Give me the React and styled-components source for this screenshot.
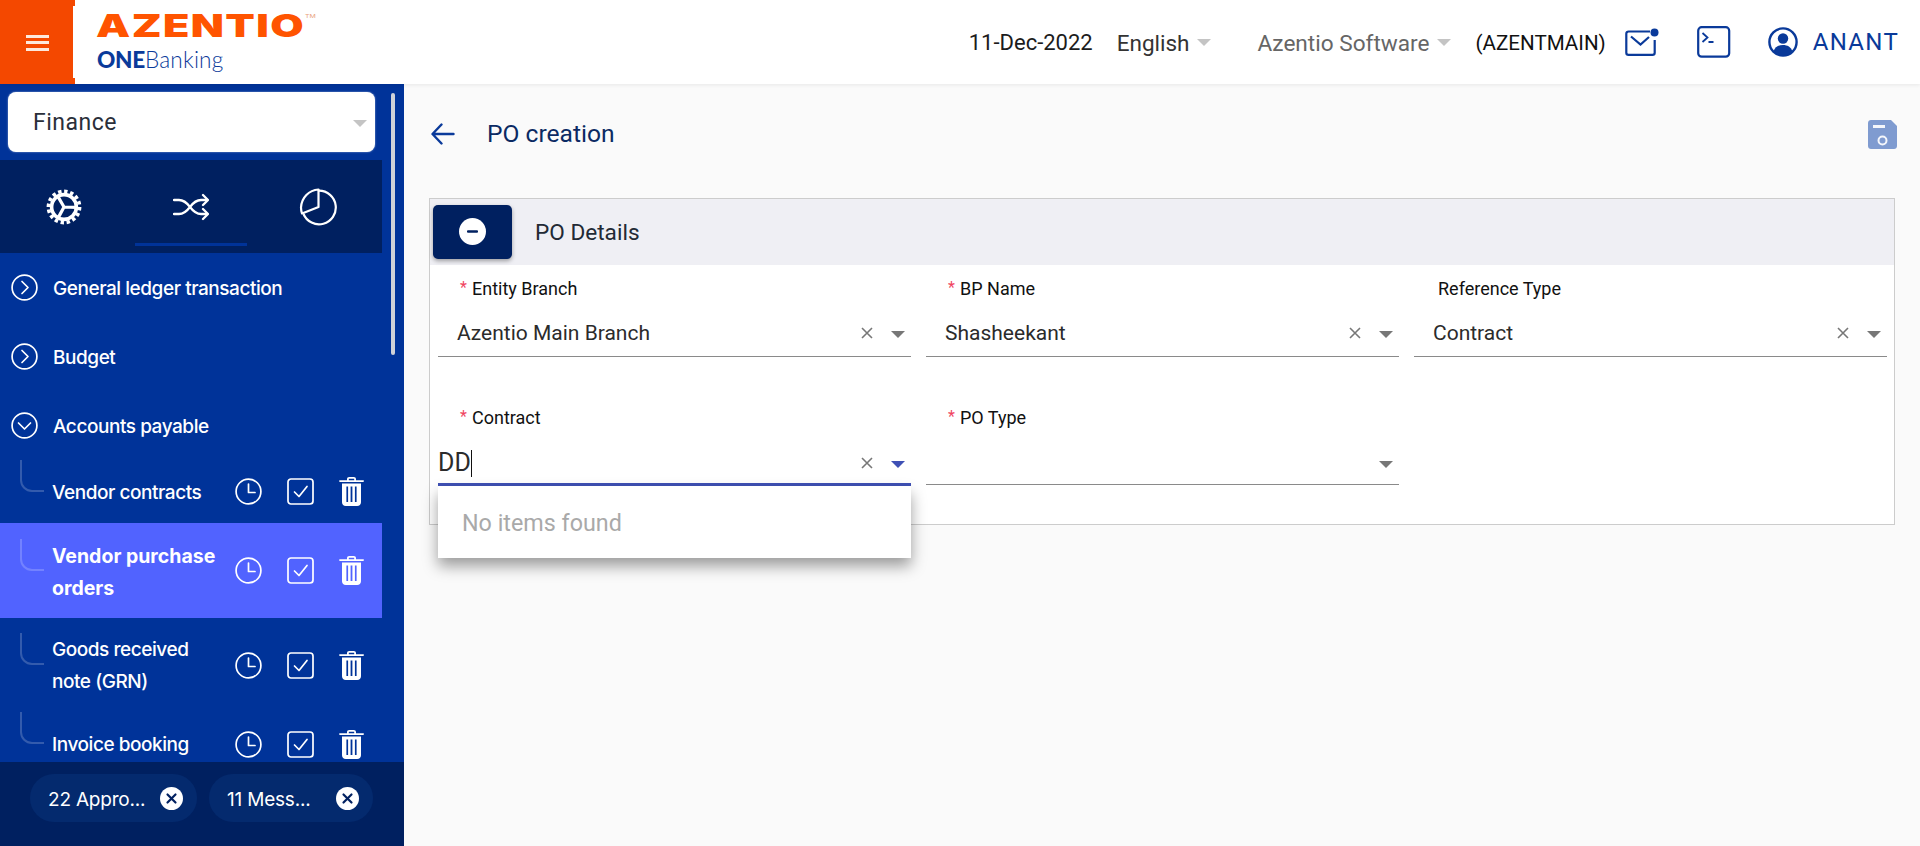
import React from 'react';
import styled, { createGlobalStyle } from 'styled-components';

const Global = createGlobalStyle`
  html, body { margin: 0; padding: 0; height: 100%; overflow: hidden; }
  body { font-family: Roboto, "Liberation Sans", sans-serif; background: #fafafa; }
  #root { height: 100%; }
  * { box-sizing: border-box; }
`;

const Page = styled.div`display: flex; flex-direction: column; height: 846px; width: 1920px;`;

/* ---------- header ---------- */
const Header = styled.header`
  display: flex; align-items: center; height: 84px; flex: none; background: #fff;
  box-shadow: 0 1px 4px rgba(0,0,0,.08); position: relative; z-index: 2;
`;
const Burger = styled.div`
  position: relative; width: 75px; height: 84px; flex: none; background: #f44800;
  display: flex; align-items: center; justify-content: center;
  &::after { content: ''; position: absolute; right: 0; top: 6px; bottom: 6px; width: 2px; background: #fff; }
`;
const BurgerLines = styled.div`
  width: 23px; height: 16px; margin-top: 1px;
  border-top: 3px solid #fde8dc; border-bottom: 3px solid #fde8dc; position: relative;
  &::before { content: ''; position: absolute; left: 0; right: 0; top: 3px; height: 3px; background: #fde8dc; }
`;
const Logo = styled.div`display: flex; flex-direction: column; margin-left: 22px; width: 240px;`;
const LogoMark = styled.div`
  font: 900 31px/30px Inter, sans-serif; color: #ff5400; transform: scaleX(1.39); transform-origin: left center;
  letter-spacing: 1px; height: 30px; margin-top: 0; margin-left: -1px; white-space: nowrap;
  sup { font-size: 5px; font-weight: 400; color: #e9a27c; vertical-align: top; line-height: 10px; letter-spacing: 0; margin-left: 0; }
`;
const LogoSub = styled.div`
  font: 300 22.6px/26px Lato, sans-serif; color: #0a3a9a; margin-top: 6px; letter-spacing: .2px;
  b { font-weight: 900; letter-spacing: -.3px; }
`;
const HeaderRight = styled.div`display: flex; align-items: center; margin-left: auto; height: 100%;`;
const HeaderText = styled.span`
  font: 400 ${p => p.$size || 20}px/26px Roboto, sans-serif; color: ${p => p.$color}; margin: ${p => p.$mt || 0}px 0 0 ${p => p.$ml}px; white-space: nowrap;
  letter-spacing: ${p => p.$ls || 0}px;
`;
const HeaderEnd = styled.div`width: 21px; flex: none;`;
const SmallCaret = styled.i`
  display: block; width: 0; height: 0; margin-left: ${p => p.$ml || 8}px; margin-top: 1px;
  border-left: 7px solid transparent; border-right: 7px solid transparent; border-top: 7px solid #c4c4c4;
`;
const HeaderIcon = styled.svg`display: block; flex: none; margin-left: ${p => p.$ml}px; color: #0a3a9a;`;

/* ---------- body ---------- */
const Body = styled.div`display: flex; flex: 1; min-height: 0;`;
const Sidebar = styled.aside`
  position: relative; width: 404px; flex: none; background: #003399; display: flex; flex-direction: column;
`;
const ScrollThumb = styled.div`position: absolute; left: 391px; top: 9px; width: 4px; height: 262px; background: #cfd2d8; border-radius: 2px;`;
const SelectWrap = styled.div`padding: 8px 29px 8px 8px; flex: none;`;
const ModuleSelect = styled.div`
  height: 60px; background: #fff; border-radius: 8px; display: flex; align-items: center; padding: 1px 8px 0 25px;
  justify-content: space-between; font: 400 23px/28px Roboto, sans-serif; color: #2a2f3a; letter-spacing: .5px;
  box-shadow: 0 0 2px rgba(255,255,255,.6);
`;
const Tabs = styled.div`width: 382px; height: 93px; flex: none; background: #002060; display: grid; grid-template-columns: repeat(3, 127px);`;
const Tab = styled.div`position: relative; display: flex; align-items: center; justify-content: center; color: #fff;`;
const TabLine = styled.div`position: absolute; left: 8px; right: 7px; bottom: 7px; height: 3px; background: #003399;`;
const Menu = styled.nav`flex: 1; min-height: 0; overflow: hidden; width: 382px;`;
const GroupRow = styled.div`
  display: flex; align-items: center; height: 69px; padding-left: 11px; gap: 15px;
  font: 500 19px/24px Inter, sans-serif; color: #fff; letter-spacing: -.45px;
  svg { flex: none; }
`;
const GroupText = styled.span`margin-top: 3px;`;
const SubRow = styled.div`
  display: flex; align-items: center; height: ${p => p.$h}px; padding: 0 18px 0 20px;
  background: ${p => p.$active ? '#5163ff' : 'transparent'};
`;
const Connector = styled.div`
  align-self: flex-start; flex: none; width: 24px; height: 32px; margin-top: ${p => p.$top}px;
  border-left: 2px solid rgba(255,255,255,.2); border-bottom: 2px solid rgba(255,255,255,.2); border-bottom-left-radius: 12px;
`;
const SubText = styled.div`
  margin: 2px 0 0 8px; width: 176px; font: ${p => p.$active ? '700 19.5px' : '500 19px'}/32px Inter, sans-serif; color: #fff;
  letter-spacing: ${p => p.$active ? 0 : -.45}px;
`;
const Actions = styled.div`display: flex; align-items: center; gap: 25px; margin-left: auto; color: #fff; svg { display: block; }`;
const Footer = styled.footer`
  height: 84px; flex: none; background: #002060; display: flex; gap: 12px; padding: 12px 0 0 30px; position: relative;
`;
const Chip = styled.div`
  display: flex; align-items: center; justify-content: space-between; width: ${p => p.$w}px; height: 48px;
  border-radius: 24px; background: #042a6e; padding: 0 14px 0 18px; color: #fff;
  font: 400 19px/26px Inter, sans-serif; letter-spacing: -.2px;
`;
const ChipText = styled.span`margin-top: 3px; white-space: nowrap;`;

/* ---------- main ---------- */
const Main = styled.main`flex: 1; min-width: 0; padding: 26px 25px 0 25px; background: #fafafa;`;
const TitleRow = styled.div`display: flex; align-items: center; height: 48px; padding-left: 2px; margin: 0 -2px 40px 0;`;
const Title = styled.h1`margin: 0 0 0 32px; font: 400 24.6px/30px Roboto, sans-serif; color: #0b2a63;`;
const SaveIcon = styled.svg`display: block; margin-left: auto;`;
const Card = styled.section`border: 1px solid #cccccc; background: #fff;`;
const CardHead = styled.div`display: flex; align-items: center; height: 66px; background: #efeff4; padding: 0 0 0 3px;`;
const ToggleBtn = styled.div`
  width: 79px; height: 54px; border-radius: 5px; background: #002060; display: flex; align-items: center; justify-content: center;
  box-shadow: 0 2px 4px rgba(0,0,0,.35); margin-top: -1px;
`;
const CardTitle = styled.h2`margin: 2px 0 0 23px; font: 400 22.6px/28px Roboto, sans-serif; color: #222a35;`;
const Fields = styled.div`
  display: grid; grid-template-columns: repeat(3, 473px); column-gap: 15px; row-gap: 36px; padding: 0 0 39px 8px;
`;
const Field = styled.div`display: flex; flex-direction: column; height: 92px; position: relative;`;
const Label = styled.label`
  margin-top: ${p => p.$low ? 15 : 14}px; height: 20px; padding-left: ${p => p.$req ? 22 : 24}px; font: 400 18px/20px Roboto, sans-serif; color: #111;
  display: flex; align-items: center;
`;
const Star = styled.span`color: #f0455f; font-size: 16px; width: 12px; flex: none; margin-top: -3px;`;
const Control = styled.div`
  position: relative; flex: 1; display: flex; align-items: flex-end;
  padding: 0 6px ${p => p.$focus ? 5 : p.$low ? 6 : 8}px ${p => p.$focus ? 0 : 19}px;
  border-bottom: ${p => p.$focus ? '3px solid #3f51b5' : '1px solid #8a8a8a'};
  margin-bottom: ${p => p.$focus ? -1 : 0}px;
`;
const Value = styled.span`font: 400 21px/30px Roboto, sans-serif; color: #2b2b2b; white-space: nowrap;`;
const Typed = styled.span`font: 400 25px/30px Roboto, sans-serif; color: #2b2b2b; display: flex; align-items: center;`;
const Caret = styled.i`display: block; width: 1px; height: 27px; background: #111;`;
const ControlIcons = styled.div`display: flex; align-items: center; margin-left: auto; height: 30px; svg { display: block; margin-right: 18px; }`;
const Arrow = styled.i`
  display: block; width: 0; height: 0; margin-top: 3px;
  border-left: 7px solid transparent; border-right: 7px solid transparent;
  border-top: 7px solid ${p => p.$focus ? '#3f51b5' : '#777'};
`;
const Panel = styled.div`
  position: absolute; left: 0; right: 0; top: 100%; margin-top: 3px; height: 72px; background: #fff; z-index: 3; padding-left: 24px;
  font: 400 23.3px/74px Roboto, sans-serif; color: #a9a9a9;
  box-shadow: 0 8px 14px rgba(0,0,0,.38);
`;

/* ---------- drawings ---------- */
const CircleChevron = ({ down }) => (
  <svg width="27" height="27" viewBox="0 0 27 27" fill="none" stroke="#fff" strokeWidth="1.7" strokeLinecap="round" strokeLinejoin="round">
    <circle cx="13.5" cy="13.5" r="12.4" />
    {down ? <path d="M7.5 11l6 6 6-6" /> : <path d="M11 7.5l6 6-6 6" />}
  </svg>
);
const ClockIcon = () => (
  <svg width="27" height="27" viewBox="0 0 27 27" fill="none" stroke="currentColor" strokeWidth="1.7" strokeLinecap="round" strokeLinejoin="round">
    <circle cx="13.5" cy="13.5" r="12.4" /><path d="M13.5 6v8.5h6.5" />
  </svg>
);
const CheckIcon = () => (
  <svg width="27" height="27" viewBox="0 0 27 27" fill="none" stroke="currentColor" strokeWidth="1.7" strokeLinecap="round" strokeLinejoin="round">
    <rect x="1" y="1" width="25" height="25" rx="3" /><path d="M7.5 14l4.5 4.5 8-10" />
  </svg>
);
const TrashIcon = () => (
  <svg width="25" height="29" viewBox="0 0 25 29">
    <path fill="currentColor" fillRule="evenodd" d="M8 3.2V2.2C8 .9 8.9 0 10.2 0h4.6C16.1 0 17 .9 17 2.2v1h7c.6 0 1 .4 1 .9s-.4.9-1 .9H1c-.6 0-1-.4-1-.9s.4-.9 1-.9h7zm1.8 0h5.4V2.2c0-.3-.1-.4-.4-.4h-4.6c-.3 0-.4.1-.4.4v1zM3 6.5h19v18.7c0 2.1-1.6 3.8-3.8 3.8H6.8C4.6 29 3 27.3 3 25.2V6.5zm4.4 3v15.5h1.7V9.5zm4.2 0v15.5h1.8V9.5zm4.3 0v15.5h1.7V9.5z" />
  </svg>
);
const ChipClose = () => (
  <svg width="23" height="23" viewBox="0 0 23 23">
    <circle cx="11.5" cy="11.5" r="11.5" fill="#fff" />
    <path d="M7.5 7.5l8 8M15.5 7.5l-8 8" stroke="#002060" strokeWidth="2.2" strokeLinecap="round" />
  </svg>
);
const ClearX = () => (
  <svg width="12" height="12" viewBox="0 0 12 12"><path d="M1 1l10 10M11 1L1 11" stroke="#777" strokeWidth="1.6" /></svg>
);

const menuIcons = (
  <Actions><ClockIcon /><CheckIcon /><TrashIcon /></Actions>
);

const FieldBox = ({ label, req, value, clear = true, low }) => (
  <Field>
    <Label $req={req} $low={low}>{req && <Star>*</Star>}{label}</Label>
    <Control $low={low}>
      <Value>{value}</Value>
      <ControlIcons>{clear && <ClearX />}<Arrow /></ControlIcons>
    </Control>
  </Field>
);

export default function App() {
  return (
    <Page>
      <Global />
      <Header>
        <Burger><BurgerLines /></Burger>
        <Logo>
          <LogoMark>AZENTIO<sup>TM</sup></LogoMark>
          <LogoSub><b>ONE</b>Banking</LogoSub>
        </Logo>
        <HeaderRight>
          <HeaderText $color="#1c1c1c" $ml={0} $size={22} $mt={1}>11-Dec-2022</HeaderText>
          <HeaderText $color="#333" $ml={24} $size={22.5} $mt={2}>English</HeaderText>
          <SmallCaret />
          <HeaderText $color="#666" $ml={46} $size={22.6} $mt={3}>Azentio Software</HeaderText>
          <SmallCaret />
          <HeaderText $color="#111" $ml={24} $size={20.6} $mt={1}>(AZENTMAIN)</HeaderText>
          <HeaderIcon $ml={19} width="34" height="28" viewBox="0 0 34 28" fill="none" stroke="currentColor" strokeWidth="2.2">
            <path d="M25 3.5H3.500c-1.200 0-2.200 1-2.200 2.200v19c0 1.200 1 2.200 2.200 2.200h24c1.200 0 2.200-1 2.200-2.200V12" />
            <path d="M6 8.500l9.500 8L24 9" />
            <circle cx="29.5" cy="4.5" r="4" fill="currentColor" stroke="none" />
          </HeaderIcon>
          <HeaderIcon $ml={38} width="34" height="32" viewBox="0 0 34 32" fill="none" stroke="currentColor" strokeWidth="2.2">
            <rect x="1.2" y="1.2" width="31" height="29.5" rx="3.5" />
            <path d="M5.500 7l5 4.500-5 4.500M11.500 16h5" strokeWidth="1.8" />
          </HeaderIcon>
          <HeaderIcon $ml={37} width="30" height="30" viewBox="0 0 30 30" fill="none" stroke="currentColor" strokeWidth="2.4">
            <circle cx="15" cy="15" r="13.6" />
            <circle cx="15" cy="11.5" r="5.2" fill="currentColor" stroke="none" />
            <path d="M5.500 24.500c1.500-4.500 5-6.500 9.500-6.500s8 2 9.500 6.500c-2.500 2.500-5.800 4-9.500 4s-7-1.500-9.500-4z" fill="currentColor" stroke="none" />
          </HeaderIcon>
          <HeaderText $color="#0a3a9a" $ml={15} $size={24} $ls={1.3}>ANANT</HeaderText>
          <HeaderEnd />
        </HeaderRight>
      </Header>
      <Body>
        <Sidebar>
          <ScrollThumb />
          <SelectWrap>
            <ModuleSelect>Finance<SmallCaret /></ModuleSelect>
          </SelectWrap>
          <Tabs>
            <Tab>
              <svg width="36" height="36" viewBox="0 0 36 36" fill="none" stroke="#fff">
                <circle cx="18" cy="18" r="15.6" strokeWidth="3.6" strokeDasharray="3.4 2.7" />
                <circle cx="18" cy="18" r="12.4" strokeWidth="3.6" />
                <path d="M18 18V6M18 18L7.500 24.500M18 18l10.500 6.500" strokeWidth="3.200" transform="rotate(-30 18 18)" />
              </svg>
            </Tab>
            <Tab>
              <svg width="36" height="28" viewBox="0 0 36 28" fill="none" stroke="#fff" strokeWidth="2.3" strokeLinecap="round" strokeLinejoin="round">
                <path d="M1 7h5c5 0 8 3 11 7s6 7 11 7h6M1 21h5c5 0 8-3 11-7s6-7 11-7h6" />
                <path d="M30 2l5 5-5 5M30 16l5 5-5 5" />
              </svg>
              <TabLine />
            </Tab>
            <Tab>
              <svg width="38" height="38" viewBox="0 0 38 38" fill="none" stroke="#fff" strokeWidth="2.2" strokeLinejoin="round">
                <path d="M20 2.700a16.800 16.800 0 1 1-15.500 23.300" />
                <path d="M19.500 1.500C10 2 2.500 9.500 2 19.500c0 2 .3 4 1 6L19.500 19z" />
              </svg>
            </Tab>
          </Tabs>
          <Menu>
            <GroupRow><CircleChevron /><GroupText>General ledger transaction</GroupText></GroupRow>
            <GroupRow><CircleChevron /><GroupText>Budget</GroupText></GroupRow>
            <GroupRow><CircleChevron down /><GroupText>Accounts payable</GroupText></GroupRow>
            <SubRow $h={63}><Connector $top={0} /><SubText>Vendor contracts</SubText>{menuIcons}</SubRow>
            <SubRow $h={95} $active><Connector $top={16} /><SubText $active>Vendor purchase orders</SubText>{menuIcons}</SubRow>
            <SubRow $h={94}><Connector $top={15} /><SubText>Goods received note (GRN)</SubText>{menuIcons}</SubRow>
            <SubRow $h={64}><Connector $top={0} /><SubText>Invoice booking</SubText>{menuIcons}</SubRow>
          </Menu>
          <Footer>
            <Chip $w={167}><ChipText>22 Appro...</ChipText><ChipClose /></Chip>
            <Chip $w={164}><ChipText>11 Mess...</ChipText><ChipClose /></Chip>
          </Footer>
        </Sidebar>
        <Main>
          <TitleRow>
            <svg width="24" height="24" viewBox="0 0 24 24" fill="none" stroke="#0a3a9a" strokeWidth="2.4" strokeLinecap="round" strokeLinejoin="round">
              <path d="M22.500 12H2M10.500 2.500L1.500 12l9 9.500" />
            </svg>
            <Title>PO creation</Title>
            <SaveIcon width="29" height="29" viewBox="0 0 29 29">
              <path d="M3 0h20l6 6v20c0 1.700-1.300 3-3 3H3c-1.700 0-3-1.300-3-3V3c0-1.700 1.300-3 3-3z" fill="#7f9bd0" />
              <rect x="5" y="5" width="12" height="3" fill="#f4f6fb" />
              <circle cx="14.5" cy="20.5" r="4" fill="none" stroke="#f4f6fb" strokeWidth="2" />
            </SaveIcon>
          </TitleRow>
          <Card>
            <CardHead>
              <ToggleBtn>
                <svg width="27" height="27" viewBox="0 0 27 27">
                  <circle cx="13.5" cy="13.5" r="13.5" fill="#fff" />
                  <rect x="8" y="12.3" width="11" height="2.4" rx="1" fill="#002060" />
                </svg>
              </ToggleBtn>
              <CardTitle>PO Details</CardTitle>
            </CardHead>
            <Fields>
              <FieldBox req label="Entity Branch" value="Azentio Main Branch" />
              <FieldBox req label="BP Name" value="Shasheekant" />
              <FieldBox label="Reference Type" value="Contract" />
              <Field>
                <Label $req $low><Star>*</Star>Contract</Label>
                <Control $focus>
                  <Typed>DD<Caret /></Typed>
                  <ControlIcons><ClearX /><Arrow $focus /></ControlIcons>
                  <Panel>No items found</Panel>
                </Control>
              </Field>
              <FieldBox req low label="PO Type" value="" clear={false} />
            </Fields>
          </Card>
        </Main>
      </Body>
    </Page>
  );
}
